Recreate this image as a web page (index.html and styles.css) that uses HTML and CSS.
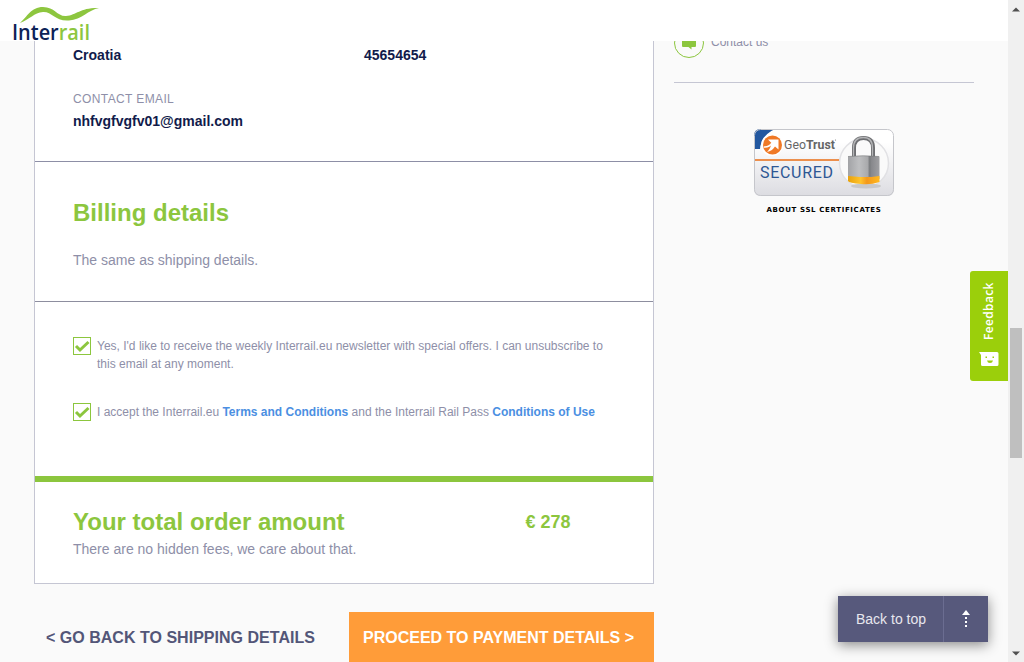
FILE: index.html
```html
<!DOCTYPE html>
<html lang="en">
<head>
<meta charset="utf-8">
<title>Interrail - Order overview</title>
<link rel="stylesheet" href="styles.css">
</head>
<body>
<div class="viewport">
  <div class="page">
    <header class="header">
      <svg class="logo" width="90" height="35" viewBox="0 0 90 35" role="img" aria-label="Interrail">
        <path d="M8 17C15 11 19 1 31 1C43 1 45 10.500 54 10C65 9 68 1.500 87 2C76 4 70 13.500 57 14.500C43 15.500 40 5.500 31 6C22 7 18 13 8 17Z" fill="#8dc63f"/>
        <text class="logo-text" x="0" y="34" textLength="78" lengthAdjust="spacingAndGlyphs"><tspan class="logo-navy">Inter</tspan><tspan class="logo-green">rail</tspan></text>
      </svg>
    </header>
    <main class="main">
      <div class="order">
        <div class="card">
          <section class="shipping">
            <div class="columns"><strong>Croatia</strong><strong>45654654</strong></div>
            <div class="label">CONTACT EMAIL</div>
            <strong class="email">nhfvgfvgfv01@gmail.com</strong>
          </section>
          <section class="billing">
            <h2>Billing details</h2>
            <p class="body-text same">The same as shipping details.</p>
          </section>
          <section class="consents">
            <div class="consent">
              <span class="check"><svg width="16" height="16" viewBox="0 0 16 16"><path d="M2 8L6 12L14.500 4" fill="none" stroke="#8cc63e" stroke-width="3"/></svg></span>
              <p><span>Yes, I'd like to receive the weekly Interrail.eu newsletter with special offers. I can unsubscribe to</span><br><span>this email at any moment.</span></p>
            </div>
            <div class="consent">
              <span class="check"><svg width="16" height="16" viewBox="0 0 16 16"><path d="M2 8L6 12L14.500 4" fill="none" stroke="#8cc63e" stroke-width="3"/></svg></span>
              <p>I accept the Interrail.eu <a>Terms and Conditions</a> and the Interrail Rail Pass <a>Conditions of Use</a></p>
            </div>
          </section>
          <section class="total">
            <div><h2>Your total order amount</h2><p class="body-text">There are no hidden fees, we care about that.</p></div>
            <strong class="price">€ 278</strong>
          </section>
        </div>
        <div class="actions">
          <a class="go-back">&lt; GO BACK TO SHIPPING DETAILS</a>
          <a class="proceed">PROCEED TO PAYMENT DETAILS &gt;</a>
        </div>
      </div>
      <aside class="sidebar">
        <div class="contact">
          <span class="contact-icon"><svg width="14" height="14" viewBox="0 0 14 14"><path d="M1 0H13Q14 0 14 1V10Q14 11 13 11H9.500V13.500L6.500 11H1Q0 11 0 10V1Q0 0 1 0Z" fill="#8cc63e"/></svg></span>
          <span class="contact-text">Contact us</span>
        </div>
        <svg class="seal" width="140" height="67" viewBox="0 0 140 67" role="img" aria-label="GeoTrust Secured">
          <defs>
            <linearGradient id="paper" x1="0" y1="0" x2="0" y2="1"><stop offset="0.2" stop-color="#fff"/><stop offset="1" stop-color="#dcdce1"/></linearGradient>
            <linearGradient id="steel"><stop offset="0" stop-color="#a2a3a6"/><stop offset=".35" stop-color="#bebfc1"/><stop offset=".62" stop-color="#a9aaac"/><stop offset=".68" stop-color="#818286"/><stop offset="1" stop-color="#a0a0a3"/></linearGradient>
            <linearGradient id="amber"><stop offset="0" stop-color="#e8a10b"/><stop offset=".4" stop-color="#ffc32c"/><stop offset=".6" stop-color="#f4981b"/><stop offset="1" stop-color="#ffb81e"/></linearGradient>
            <clipPath id="sealshape"><rect width="140" height="67" rx="6"/></clipPath>
          </defs>
          <g clip-path="url(#sealshape)">
            <rect width="140" height="67" fill="url(#paper)"/>
            <path d="M0 0H21Q12 4 8 12Q6 17 6 20H0Z" fill="#2358a0"/>
            <path d="M0 31H87" stroke="#ec8f4d" stroke-width="2"/>
            <circle cx="110" cy="34" r="24.500" fill="#fafafa" stroke="#e1e1e4" stroke-width="1.500"/>
          </g>
          <rect x=".5" y=".5" width="139" height="66" rx="6" fill="none" stroke="#c5c6cb"/>
          <circle cx="18" cy="16" r="11" fill="#fff"/>
          <circle cx="18.500" cy="16" r="9.500" fill="#f07926"/>
          <path d="M14 10.500H24.500V20.500L21 17.500Q18 22 13 23Q17 19 17.500 14Z" fill="#fff"/>
          <path d="M10 18Q15 18.500 18 14" fill="none" stroke="#fff" stroke-width="1.500"/>
          <text class="geo" x="30" y="20" textLength="51" lengthAdjust="spacingAndGlyphs">Geo<tspan class="trust">Trust</tspan></text>
          <circle cx="81.500" cy="11" r=".6" fill="#777"/>
          <text class="secured" x="6" y="48.500" textLength="73">SECURED</text>
          <ellipse cx="112" cy="57" rx="15" ry="2.500" fill="#c8c8ca"/>
          <path d="M100 28V19Q100 9 109.500 9Q119 9 119 19V28" fill="none" stroke="#6d6e71" stroke-width="4"/>
          <path d="M99.500 28V19Q99.500 8.500 109.500 8.500Q118.500 8.500 118.500 19V28" fill="none" stroke="#b4b5b7" stroke-width="1.300"/>
          <path d="M94 27.500Q109 26 125.500 27.500V50H94Z" fill="url(#steel)"/>
          <path d="M94 47L106 48L117 48L125.500 47V53Q117 56 107 55Q95 54 94 52Z" fill="url(#amber)"/>
          <path d="M94 27.500Q109 26 125 27.500M116 27V47" fill="none" stroke="#77797b" stroke-width=".6"/>
        </svg>
        <a class="ssl">ABOUT SSL CERTIFICATES</a>
      </aside>
    </main>
  </div>
  <div class="scrollbar"><svg width="10" height="5" viewBox="0 0 10 5"><path d="M1 4.500L5 .5L9 4.500Z" fill="#505050"/></svg><span class="thumb"></span><svg class="down" width="10" height="5" viewBox="0 0 10 5"><path d="M1 .5L5 4.500L9 .5Z" fill="#505050"/></svg></div>
  <div class="feedback">
    <span>Feedback</span>
    <svg width="20" height="16" viewBox="0 0 20 16"><path d="M0 1H18Q19.500 1 19.500 2.500V13.500Q19.500 15 18 15H3.500Q2 15 2 13.500V4Z" fill="#fff"/><path d="M6.500 5.500H8V7H6.500ZM13.500 5.500H15V7H13.500ZM8 9.500H14Q13.500 12 11 12Q8.500 12 8 9.500Z" fill="#9bcf0b"/></svg>
  </div>
  <div class="to-top"><span class="to-top-label">Back to top</span><span class="to-top-icon"><svg width="8" height="18" viewBox="0 0 8 18"><path d="M0 5L4 0L8 5Z" fill="#fff"/><path d="M3 7H5V9H3ZM3 11H5V13H3ZM3 15H5V17H3Z" fill="#fff"/></svg></span></div>
</div>
</body>
</html>
```
FILE: styles.css
```css
* { box-sizing: border-box; }
body { margin: 0; font-family: "Liberation Sans", Arial, sans-serif; color: #8e8fa8; }
h2, p { margin: 0; }
svg { display: block; }
.viewport { position: relative; display: flex; width: 1024px; height: 662px; overflow: hidden; }
.page { width: 1008px; height: 662px; background: #fafafa; overflow: hidden; }
.header { position: relative; z-index: 1; height: 41px; padding: 6px 0 0 12px; background: #fff; }
.logo { overflow: visible; }
.logo-text { font: 600 22px "Open Sans", sans-serif; }
.logo-navy { fill: #0c2257; }
.logo-green { fill: #8dc63f; }
.main { display: flex; gap: 20px; padding-left: 34px; }
.order { width: 620px; }
.card { height: 543px; background: #fff; border: 1px solid #c5c6d3; border-top: 0; white-space: nowrap; }
.shipping { height: 121px; padding: 5px 38px 0; border-bottom: 1px solid #8d8fa6; color: #111b4b; font-size: 14px; line-height: 18px; }
.columns { display: grid; grid-template-columns: 291px 1fr; }
.label { margin-top: 26px; color: #8e8fa8; font-size: 12px; letter-spacing: .38px; }
.email { display: block; margin-top: 4px; }
.billing { height: 140px; padding: 37px 38px 0; border-bottom: 1px solid #8d8e9f; }
h2 { color: #8cc63e; font-size: 24px; line-height: 28px; }
.body-text { font-size: 14px; line-height: 18px; }
.same { margin-top: 24px; }
.consents { height: 180px; padding: 35px 38px 0; border-bottom: 6px solid #8cc63e; }
.consent { display: flex; gap: 6px; font-size: 12px; line-height: 18px; }
.consent + .consent { margin-top: 30px; }
.check { width: 18px; height: 18px; border: 1px solid #8cc63e; flex: none; }
.consent a { color: #4b8fe2; font-weight: bold; }
.total { display: grid; grid-template-columns: 452.5px 1fr; padding: 26px 38px 0; }
.total .body-text { margin-top: 4px; }
.price { color: #8cc63e; font-size: 18px; line-height: 28px; }
.actions { display: flex; justify-content: space-between; margin-top: 28px; height: 50px; color: #535678; font-size: 16px; line-height: 52px; font-weight: bold; white-space: nowrap; }
.go-back { padding-left: 12px; letter-spacing: .02px; }
.proceed { width: 305px; padding-left: 14px; color: #fff; background: #ff9c39; }
.sidebar { display: flex; flex-direction: column; align-items: center; width: 300px; }
.contact { display: flex; align-items: center; gap: 7px; width: 300px; height: 55px; margin-top: -13px; padding-bottom: 24px; border-bottom: 1px solid #c5c6d3; font-size: 12px; }
.contact-icon { display: flex; align-items: center; justify-content: center; width: 30px; height: 30px; border: 1px solid #8cc63e; border-radius: 50%; }
.contact-text { line-height: 18px; margin-top: -2px; }
.seal { margin-top: 46px; }
.geo { font: 12.5px Roboto, sans-serif; fill: #666; }
.trust { font-weight: bold; }
.secured { font: 16px Roboto, sans-serif; fill: #2e5794; }
.ssl { margin-top: 9px; color: #000; font: bold 7px/10px "DejaVu Sans", sans-serif; letter-spacing: .65px; white-space: nowrap; }
.scrollbar { display: flex; flex-direction: column; align-items: center; width: 16px; height: 662px; padding: 7px 0 6px; background: #f0f0f0; }
.thumb { width: 12px; height: 130px; margin-top: 316px; background: #bfbfbf; }
.down { margin-top: auto; }
.feedback { position: absolute; left: 970px; top: 271px; width: 38px; height: 110px; display: flex; flex-direction: column; align-items: center; padding-top: 12px; color: #fff; background: #9bcf0b; border-radius: 3px 0 0 3px; font: 600 12px/16px "Open Sans", sans-serif; letter-spacing: .35px; }
.feedback span { height: 57px; writing-mode: vertical-rl; transform: rotate(180deg); white-space: nowrap; }
.feedback svg { margin-top: 11px; }
.to-top { position: absolute; left: 838px; top: 596px; display: flex; width: 150px; height: 46px; background: #57597c; color: #fff; box-shadow: 0 3px 12px rgba(0,0,0,.45); font-size: 14px; line-height: 46px; }
.to-top-label { width: 106px; padding-left: 18px; border-right: 1px solid #6b6d91; color: #e7e7ee; white-space: nowrap; }
.to-top-icon { display: flex; flex: 1; align-items: center; justify-content: center; }
```
